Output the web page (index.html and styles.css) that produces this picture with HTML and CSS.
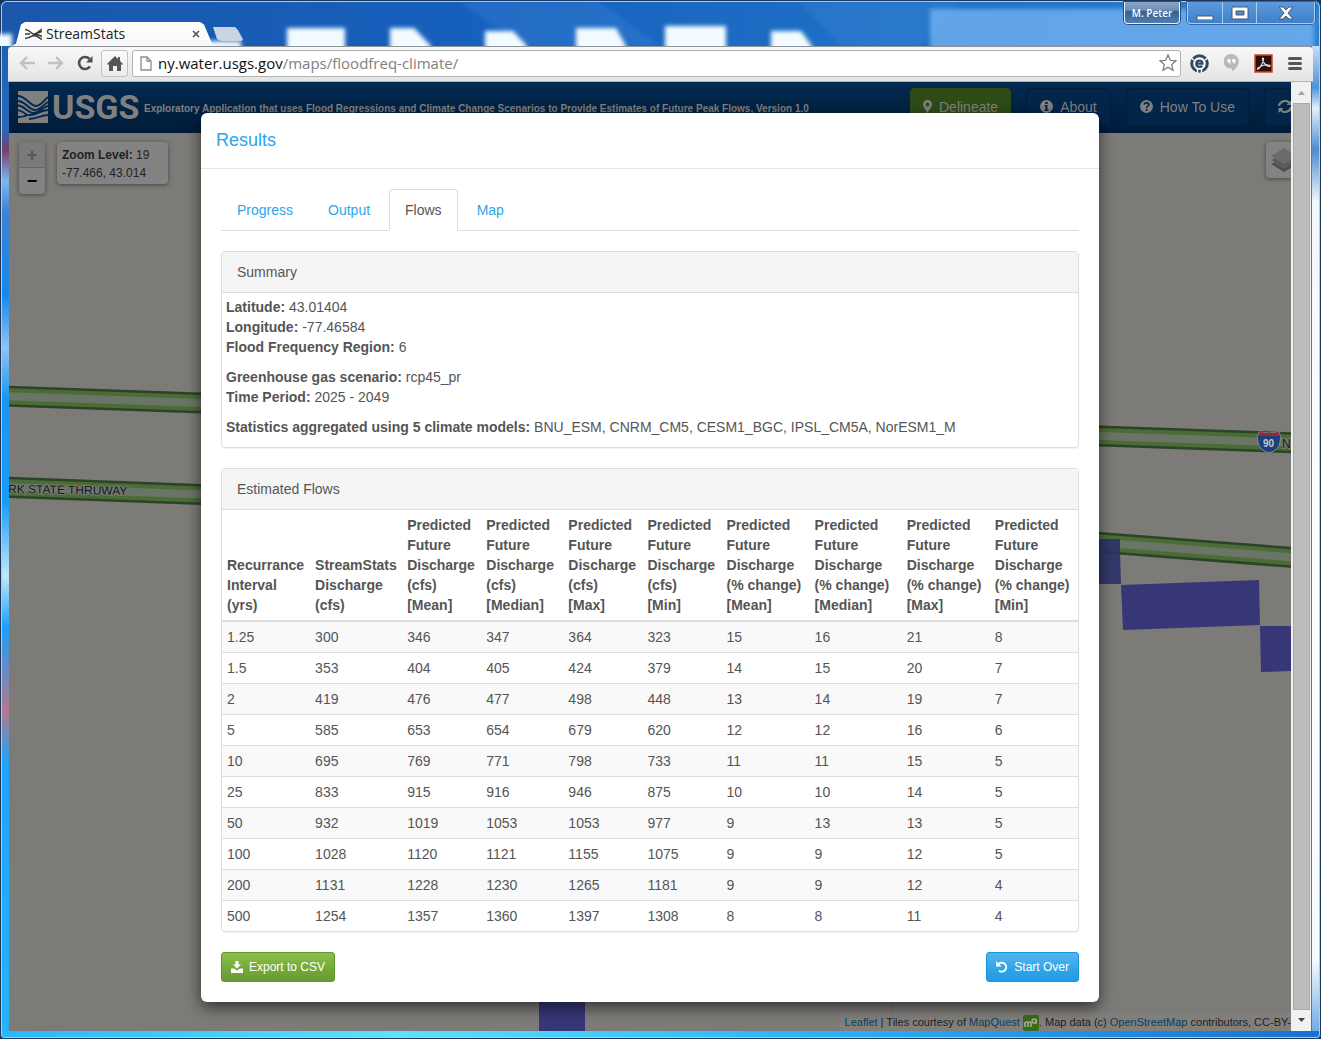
FILE: index.html
```html
<!DOCTYPE html>
<html lang="en">
<head>
<meta charset="utf-8">
<title>StreamStats</title>
<link rel="stylesheet" href="styles.css">
</head>
<body>
<div class="window">
  <header class="titlebar">
    <svg class="glass" aria-hidden="true">
      <defs><filter id="soft" x="-10%" y="-40%" width="120%" height="180%"><feGaussianBlur stdDeviation="2"/></filter></defs>
      <path d="M460 2h140l60 44H520zM800 2h160l-40 44H840z" fill="#4a90dd" opacity=".25" filter="url(#soft)"/>
      <path d="M930 9h384v40H930z" fill="#7db9f5" opacity=".7" filter="url(#soft)"/>
      <g fill="#f2fbff" filter="url(#soft)">
        <path d="M287 28h58v25h-58zM390 28h24l17 18v8h-41zM485 31h28l14 15v8h-42zM576 28h40l10 18v8h-50zM665 26h61v28h-61zM771 31h30l11 15v8h-41zM-10 34h22v16h-22zM205 41h36v8h-36z"/>
      </g>
    </svg>
    <div class="tab">
      <svg class="tab-icon" viewBox="0 0 17 12" aria-hidden="true"><path d="M0 1.500c5 0 6 4.500 9 4.500 3 0 5-3 8-5M0 10.500C6 10.500 8 6 17 3.500M0 6h5M7 8c4-1 5 0 10 3.500M10 6.500c3-.500 4 .500 7 2" fill="none" stroke="#3b3b3b" stroke-width="1.500"/></svg>
      <span class="tab-title">StreamStats</span>
      <button class="tab-close" aria-label="Close tab"><svg viewBox="0 0 8 8"><path d="M1 1l6 6M7 1L1 7" stroke="#555" stroke-width="1.7"/></svg></button>
    </div>
    <button class="new-tab" aria-label="New tab"></button>
    <div class="win-controls">
      <button class="profile">M. Peter</button>
      <div class="win-group">
        <button aria-label="Minimize"><svg width="18" height="14" viewBox="0 0 18 14"><path d="M1 10h16v4H1z" fill="#fff" stroke="#47586e"/></svg></button>
        <button aria-label="Maximize"><svg width="18" height="14" viewBox="0 0 18 14"><path d="M1 1h16v12H1zM5 5v4h8V5z" fill="#fff" stroke="#47586e" fill-rule="evenodd"/></svg></button>
        <button class="wide" aria-label="Close"><svg width="16" height="14" viewBox="0 0 16 14"><path d="M1 1h4l3 3 3-3h4l-5 6 5 6h-4L8 10l-3 3H1l5-6z" fill="#fff" stroke="#47586e"/></svg></button>
      </div>
    </div>
  </header>

  <div class="toolbar">
    <button class="nav-btn" aria-label="Back"><svg width="16" height="14" viewBox="0 0 16 14"><path d="M8 1L2 7l6 6M2 7h14" fill="none" stroke="#c1c1c1" stroke-width="2.4"/></svg></button>
    <button class="nav-btn" aria-label="Forward"><svg width="16" height="14" viewBox="0 0 16 14"><path d="M8 1l6 6-6 6M14 7H0" fill="none" stroke="#c1c1c1" stroke-width="2.4"/></svg></button>
    <button class="nav-btn" aria-label="Reload"><svg width="16" height="16" viewBox="0 0 16 16"><path d="M13 11.5A6 6 0 1 1 12.500 4" fill="none" stroke="#505050" stroke-width="2.6"/><path d="M15.500 1v6.500H9z" fill="#505050"/></svg></button>
    <button class="home-btn" aria-label="Home"><svg width="16" height="15" viewBox="0 0 16 15"><path d="M8 0l3 3V1h2v4l3 3-1 1-1-1v7H10v-5H6v5H2V8L1 9 0 8z" fill="#555"/></svg></button>
    <div class="omnibox">
      <svg width="12" height="15" viewBox="0 0 12 15" aria-hidden="true"><path d="M1 1h6l4 4v9H1zM7 1v4h4" fill="#fff" stroke="#8d8d8d" stroke-width="1.3"/></svg>
      <div class="url" role="textbox" aria-label="Address" contenteditable="true" spellcheck="false">ny.water.usgs.gov<span class="path">/maps/floodfreq-climate/</span></div>
      <button class="star" aria-label="Bookmark"><svg width="18" height="18" viewBox="0 0 18 18"><path d="M9 1l2.300 5.300 5.700.500-4.300 3.800 1.300 5.700L9 13.300 4 16.300l1.300-5.700L1 6.800l5.700-.500z" fill="#fff" stroke="#777" stroke-width="1.200"/></svg></button>
    </div>
    <div class="extensions">
      <button class="nav-btn" aria-label="Extension"><svg width="19" height="19" viewBox="0 0 19 19"><circle cx="9.500" cy="9.500" r="9.300" fill="#34495e"/><circle cx="9.500" cy="9.500" r="6.300" fill="#fff"/><path d="M0 3l4 3M19 3l-4 3M7.500 14v5M11.500 14v5" stroke="#fff" stroke-width="1.400"/><path d="M6.200 9.700h6.300c0-2-1.200-3.100-3-3.100s-3.200 1.300-3.200 3.100 1.300 3.200 3.300 3.200c1.200 0 2-.400 2.700-1" fill="none" stroke="#34495e" stroke-width="2.200"/></svg></button>
      <button class="nav-btn" aria-label="Hangouts"><svg width="15" height="18" viewBox="0 0 15 18"><path d="M7.500 0a7.300 7.300 0 0 1 7.300 7.300c0 4.500-3.300 7.700-6.800 10.200v-3A7.300 7.300 0 1 1 7.500 0z" fill="#b9b9b9"/><path d="M3.500 5h3v3.500L5 10.500V8.300H3.500zM8.300 5h3v3.500l-1.500 2V8.300H8.300z" fill="#fff"/></svg></button>
      <button class="nav-btn" aria-label="Adobe Acrobat"><svg width="19" height="19" viewBox="0 0 19 19"><path d="M1 1h17v17H1z" fill="#1d1214" stroke="#f03a10" stroke-width="1.500"/><path d="M9 4c-1.500 0 0 4 2 6s4 3 5 2-3-1.500-6-.800S4 13.500 3.500 14.800s2 0 3.800-3.500S10.500 4 9 4z" fill="none" stroke="#e8dcdc" stroke-width="1.100"/></svg></button>
      <button class="nav-btn" aria-label="Menu"><svg width="14" height="13" viewBox="0 0 14 13"><path d="M1.500 1.500h11M1.500 6.500h11M1.500 11.500h11" stroke="#555" stroke-width="3" stroke-linecap="round"/></svg></button>
    </div>
  </div>

  <div class="viewport">
    <div class="page">
      <nav class="navbar">
        <svg class="mark" viewBox="0 0 30 32" aria-hidden="true"><path d="M0 0h30v32H0z" fill="#808080"/><path d="M0 5c8 0 12 10 18 10 5 0 8-6 12-9M0 10c7 0 11 9 17 9 5 0 9-6 13-8M0 14.500c6 0 10 7.500 15 7.500 6 0 10-6 15-7M10 24c8 1 12-5 20-5M0 19c4 1 6 2 9 5-3 2-6 2-9 2M11 28c8 0 12-4 19-4" fill="none" stroke="#02274e" stroke-width="1.800"/></svg>
        <span class="wordmark">USGS</span>
        <span class="app-title">Exploratory Application that uses Flood Regressions and Climate Change Scenarios to Provide Estimates of Future Peak Flows, Version 1.0</span>
        <div class="nav-actions">
          <button class="nav-action green"><svg width="9" height="13" viewBox="0 0 9 13"><path d="M4.500 0A4.500 4.500 0 0 1 9 4.500C9 7 6 10 4.500 13 3 10 0 7 0 4.500A4.500 4.500 0 0 1 4.500 0zm0 2.500a2 2 0 1 0 0 4 2 2 0 0 0 0-4z" fill="currentColor"/></svg>Delineate</button>
          <button class="nav-action"><svg width="13" height="13" viewBox="0 0 13 13"><path d="M6.500 0a6.500 6.500 0 1 1 0 13 6.500 6.500 0 0 1 0-13zM5.300 2v2h2.400V2zM4.500 5v1.500h1v3h-1V11h4V9.500h-1V5z" fill="currentColor"/></svg>About</button>
          <button class="nav-action"><svg width="13" height="13" viewBox="0 0 13 13"><circle cx="6.500" cy="6.500" r="6.500" fill="currentColor"/><path d="M4.300 4.700c0-2.600 4.600-2.400 4.600 0 0 1.500-2.300 1.500-2.300 3.300M6.600 9v2" fill="none" stroke="#02254a" stroke-width="1.700"/></svg>How To Use</button>
          <button class="nav-action" aria-label="Refresh"><svg width="14" height="13" viewBox="0 0 14 13"><path d="M1 6a6 5.500 0 0 1 10-3.500M13 7a6 5.500 0 0 1-10 3.500" fill="none" stroke="currentColor" stroke-width="2.200"/><path d="M13.500 0v5H8.500zM.500 13V8h5z" fill="currentColor"/></svg></button>
        </div>
      </nav>

      <main class="map">
        <svg class="tiles" aria-hidden="true">
          <g fill="none">
            <g stroke="#2b4426" stroke-width="21"><path d="M-10 263L192 270 1091 303 1600 321"/><path d="M-10 354L192 361.500 1091 409.500 1600 449"/></g>
            <g stroke="#4b6c37" stroke-width="16"><path d="M-10 263L192 270 1091 303 1600 321"/><path d="M-10 354L192 361.500 1091 409.500 1600 449"/></g>
            <g stroke="#6a7566" stroke-width="8"><path d="M-10 263L192 270 1091 303 1600 321"/><path d="M-10 354L192 361.500 1091 409.500 1600 449"/></g>
          </g>
          <path d="M871 860v50M883 860v50" stroke="#6f6e72"/>
          <path d="M1060 406h51v13l1 32h-52z" fill="#2c3467" opacity=".93"/>
          <path d="M1112 452l138-5 1 45-137 5zM1251 493h60v44l-59 2zM530 860h46v60h-46z" fill="#373777"/>
          <path d="M1250 299q10 2 20 0 3 4 1 10-1 8-11 11-10-3-11-11-2-6 1-10z" fill="#1d4077" stroke="#858a91"/>
          <path d="M1251 299q9 2 18 0l2 4h-22z" fill="#9d2631"/>
          <text x="1254" y="314" class="shield">90</text>
          <text x="1273" y="315" class="road">N</text>
          <text x="-1" y="360" class="road" transform="rotate(1 0 360)">RK STATE THRUWAY</text>
        </svg>
        <div class="zoom">
          <button class="off" aria-label="Zoom in">+</button>
          <button aria-label="Zoom out">−</button>
        </div>
        <div class="coords"><b>Zoom Level:</b> 19<br>-77.466, 43.014</div>
        <button class="layers" aria-label="Layers"><svg width="28" height="26" viewBox="0 0 28 26"><path d="M1 17l13 8 13-8-4-2-9 5-9-5z" fill="#4d4d4d"/><path d="M1 13l13 8 13-8-4-2-9 5-9-5z" fill="#5a5a5a" stroke="#777" stroke-width=".600"/><path d="M14 1L1 9l13 8 13-8z" fill="#6b6b6b"/></svg></button>
        <p class="attribution"><a href="#leaflet">Leaflet</a> | Tiles courtesy of <a href="#mapquest">MapQuest</a> <svg width="16" height="16" viewBox="0 0 16 16" aria-hidden="true"><rect width="16" height="16" rx="2" fill="#3d6a18"/><path d="M2 12V7M2 8q2-2 3 0v4M5 8q2-2 3 0v4" fill="none" stroke="#a4ac9c" stroke-width="1.600"/><circle cx="11" cy="6" r="2" fill="none" stroke="#a4ac9c" stroke-width="1.500"/><path d="M13 4v5" stroke="#a4ac9c" stroke-width="1.500"/></svg>. Map data (c) <a href="#osm">OpenStreetMap</a> contributors, CC-BY-</p>
      </main>

      <section class="modal" role="dialog" aria-labelledby="results">
        <h4 class="modal-title" id="results">Results</h4>
        <div class="modal-body">
          <ul class="tabs">
            <li><a href="#progress">Progress</a></li>
            <li><a href="#output">Output</a></li>
            <li><a class="active" href="#flows">Flows</a></li>
            <li><a href="#map">Map</a></li>
          </ul>

          <section class="panel">
            <h5 class="panel-heading">Summary</h5>
            <div class="summary">
              <p><b>Latitude:</b> 43.01404<br><b>Longitude:</b> -77.46584<br><b>Flood Frequency Region:</b> 6</p>
              <p><b>Greenhouse gas scenario:</b> rcp45_pr<br><b>Time Period:</b> 2025 - 2049</p>
              <p><b>Statistics aggregated using 5 climate models:</b> BNU_ESM, CNRM_CM5, CESM1_BGC, IPSL_CM5A, NorESM1_M</p>
            </div>
          </section>

          <section class="panel">
            <h5 class="panel-heading">Estimated Flows</h5>
            <table class="flows">
              <colgroup><col class="w88"><col class="w92"><col class="w79"><col class="w82"><col class="w79"><col class="w79"><col class="w88"><col class="w92"><col class="w88"><col class="w88"></colgroup>
              <thead><tr>
                <th>Recurrance<br>Interval<br>(yrs)</th><th>StreamStats<br>Discharge<br>(cfs)</th>
                <th>Predicted<br>Future<br>Discharge<br>(cfs)<br>[Mean]</th><th>Predicted<br>Future<br>Discharge<br>(cfs)<br>[Median]</th><th>Predicted<br>Future<br>Discharge<br>(cfs)<br>[Max]</th><th>Predicted<br>Future<br>Discharge<br>(cfs)<br>[Min]</th>
                <th>Predicted<br>Future<br>Discharge<br>(% change)<br>[Mean]</th><th>Predicted<br>Future<br>Discharge<br>(% change)<br>[Median]</th><th>Predicted<br>Future<br>Discharge<br>(% change)<br>[Max]</th><th>Predicted<br>Future<br>Discharge<br>(% change)<br>[Min]</th>
              </tr></thead>
              <tbody>
                <tr><td>1.25</td><td>300</td><td>346</td><td>347</td><td>364</td><td>323</td><td>15</td><td>16</td><td>21</td><td>8</td></tr>
                <tr><td>1.5</td><td>353</td><td>404</td><td>405</td><td>424</td><td>379</td><td>14</td><td>15</td><td>20</td><td>7</td></tr>
                <tr><td>2</td><td>419</td><td>476</td><td>477</td><td>498</td><td>448</td><td>13</td><td>14</td><td>19</td><td>7</td></tr>
                <tr><td>5</td><td>585</td><td>653</td><td>654</td><td>679</td><td>620</td><td>12</td><td>12</td><td>16</td><td>6</td></tr>
                <tr><td>10</td><td>695</td><td>769</td><td>771</td><td>798</td><td>733</td><td>11</td><td>11</td><td>15</td><td>5</td></tr>
                <tr><td>25</td><td>833</td><td>915</td><td>916</td><td>946</td><td>875</td><td>10</td><td>10</td><td>14</td><td>5</td></tr>
                <tr><td>50</td><td>932</td><td>1019</td><td>1053</td><td>1053</td><td>977</td><td>9</td><td>13</td><td>13</td><td>5</td></tr>
                <tr><td>100</td><td>1028</td><td>1120</td><td>1121</td><td>1155</td><td>1075</td><td>9</td><td>9</td><td>12</td><td>5</td></tr>
                <tr><td>200</td><td>1131</td><td>1228</td><td>1230</td><td>1265</td><td>1181</td><td>9</td><td>9</td><td>12</td><td>4</td></tr>
                <tr><td>500</td><td>1254</td><td>1357</td><td>1360</td><td>1397</td><td>1308</td><td>8</td><td>8</td><td>11</td><td>4</td></tr>
              </tbody>
            </table>
          </section>

          <div class="actions">
            <button class="btn export"><svg width="12" height="12" viewBox="0 0 12 12"><path d="M4.500 0h3v3.500H10L6 7.500 2 3.500h2.500zM0 7.500h3l3 2 3-2h3V12H0z" fill="#fff"/></svg>Export to CSV</button>
            <button class="btn restart"><svg width="12" height="12" viewBox="0 0 12 12"><path d="M2 3.500A4.500 4.500 0 1 1 3 9.800" fill="none" stroke="#fff" stroke-width="2"/><path d="M0 0v5.500h5.500z" fill="#fff"/></svg>Start Over</button>
          </div>
        </div>
      </section>
    </div>

    <div class="scrollbar" aria-hidden="true">
      <svg width="7" height="4" viewBox="0 0 7 4"><path d="M0 4h7L3.500 0z" fill="#a0a0a0"/></svg>
      <div class="thumb"></div>
      <svg width="7" height="4" viewBox="0 0 7 4"><path d="M0 0h7L3.500 4z" fill="#444"/></svg>
    </div>
  </div>
</div>
</body>
</html>
```
FILE: styles.css
```css
* { box-sizing: border-box; }

body {
  margin: 0;
  background: #12305f;
  font-family: "Liberation Sans", Arial, sans-serif;
  font-size: 14px;
  line-height: 20px;
  color: #555;
}

button {
  margin: 0;
  padding: 0;
  border: 0;
  background: none;
  font: inherit;
  color: inherit;
  display: flex;
  align-items: center;
  justify-content: center;
}

svg { display: block; flex: none; }
h4, h5, p, ul { margin: 0; padding: 0; font-weight: normal; }
a { color: #2fa4e7; text-decoration: none; }

/* Browser window frame */
.window {
  display: flex;
  flex-direction: column;
  min-height: 100vh;
  padding: 0 9px 8px;
  border-radius: 7px 7px 5px 5px;
  box-shadow: inset 0 0 0 1px #1c3558, inset 0 0 0 2px #9fd0f8;
  background:
    linear-gradient(90deg, #28b8fa, #5fe0fb 30%, #2bb5fa 60%, #1671d2) left bottom / 100% 8px no-repeat,
    linear-gradient(#1d62ba, #2a68b8 8%, #743f67 10%, #7fb5ee 13%, #3a83d4 16%, #1788ea 24%, #8fc4f2 29%, #1a96f4 34%, #1a9cf8 44%, #bfe8fa 51%, #1c9ffa 56%, #b07a90 64%, #1ea4fb 69%, #26b6fb) left 46px / 9px 100% no-repeat,
    linear-gradient(#c5def7, #4d93da 4%, #e4f0fa 6%, #4d8cce 10%, #f2f7fb 15%, #fff 50%, #f4fafd 88%, #6ea9e6 95%, #1a69c8) right 46px / 9px 100% no-repeat,
    linear-gradient(90deg, #1b57ab, #1660bd 35%, #1d6fc6 65%, #2c7fd0);
}

.titlebar {
  position: relative;
  display: flex;
  height: 46px;
  padding: 0 0 0 3px;
}
.glass { position: absolute; top: 0; left: -9px; width: calc(100% + 18px); height: 46px; }

.tab {
  position: relative;
  display: flex;
  align-items: center;
  align-self: flex-end;
  width: 205px;
  height: 24px;
  padding: 0 17px 0 13px;
  gap: 4px;
  background: linear-gradient(#fff, #f7f7f7);
  clip-path: polygon(0 100%, 4px 90%, 9px 10%, 13px 0, 188px 0, 192px 10%, 200px 90%, 100% 100%);
  font-family: "Open Sans", "Noto Sans", sans-serif;
  color: #222;
}
.tab-icon { width: 17px; height: 12px; }
.tab-title { flex: 1; }
.tab-close svg { width: 8px; height: 8px; }
.new-tab {
  position: relative;
  align-self: flex-end;
  width: 30px;
  height: 14px;
  margin: 0 0 5px -4px;
  background: #c9d5e2;
  clip-path: polygon(0 0, 22px 0, 25px 3px, 100% 90%, 28px 100%, 8px 100%, 4px 85%);
}

.win-controls {
  position: relative;
  display: flex;
  gap: 7px;
  margin-left: auto;
  padding-top: 2px;
  margin-right: -3px;
  height: 24px;
}
.profile {
  width: 56px;
  border: 1px solid #e3effb;
  border-top: 0;
  border-radius: 0 0 4px 4px;
  background: linear-gradient(#87a6c8, #6d8db3 40%, #33618f 42%, #4c7fb2);
  box-shadow: 0 0 0 1px #2c4d76;
  font-family: "Open Sans", "Noto Sans", sans-serif;
  font-size: 10px;
  font-weight: 600;
  color: #fff;
}
.win-group {
  display: flex;
  border: 1px solid #a9cdf0;
  border-top: 0;
  border-radius: 0 0 4px 4px;
  box-shadow: 0 0 0 1px #34649a;
  background: linear-gradient(#5c9ade, #3f80c8);
}
.win-group button { width: 34px; }
.win-group button + button { border-left: 1px solid #a9cdf0; }
.win-group .wide { width: 58px; }

/* Toolbar */
.toolbar {
  display: flex;
  align-items: center;
  gap: 3px;
  height: 36px;
  margin: 0 -1px;
  padding: 0 7px 2px 6px;
  border-top: 1px solid #8d9299;
  border-bottom: 1px solid #b4b4b4;
  border-radius: 4px 4px 0 0;
  background: linear-gradient(#f8f8f8, #e4e4e4);
}
.nav-btn { width: 26px; height: 26px; }
.home-btn {
  width: 27px;
  height: 27px;
  border: 1px solid #c2c2c2;
  border-radius: 3px;
  background: linear-gradient(#fafafa, #ececec);
}
.omnibox {
  display: flex;
  align-items: center;
  flex: 1;
  gap: 6px;
  height: 27px;
  margin-left: 1px;
  padding: 0 3px 0 7px;
  border: 1px solid #b3b3b3;
  border-radius: 3px;
  background: #fff;
}
.url {
  flex: 1;
  font-family: "Open Sans", "Noto Sans", sans-serif;
  font-size: 15px;
  color: #111;
  white-space: nowrap;
}
.path { color: #808080; }
.extensions { display: flex; gap: 6px; margin-left: 2px; margin-right: -2px; }

/* Page and scroll bar */
.viewport { display: flex; flex: 1; min-width: 0; }
.page {
  display: grid;
  grid-template: 51px 1fr / 100%;
  flex: 1;
  min-width: 0;
  overflow: hidden;
}
.navbar {
  grid-area: 1 / 1;
  display: flex;
  align-items: center;
  padding: 0 0 2px 9px;
  background: linear-gradient(#02294f, #001c3a);
  color: #808080;
  white-space: nowrap;
}
.mark { width: 30px; height: 32px; }
.wordmark { flex: 0 0 92px; margin-left: 4px; font-family: "Roboto", "Liberation Sans", sans-serif; font-size: 34px; line-height: 40px; font-weight: bold; }
.app-title { flex: 1; min-width: 0; padding-top: 4px; font-size: 10px; font-weight: bold; overflow: hidden; }
.nav-actions { display: flex; flex: 0 0 381px; gap: 15px; overflow: hidden; }
.nav-action {
  flex: none;
  gap: 7px;
  height: 38px;
  padding: 0 13px;
  border: 1px solid #001d3d;
  border-radius: 4px;
  background: #02254a;
}
.nav-action.green { border-color: #2c4a10; background: #2f4b15; padding: 0 12px; }

.map {
  position: relative;
  grid-area: 2 / 1;
  display: flex;
  align-items: flex-start;
  padding: 9px 0 0 10px;
  gap: 12px;
  overflow: hidden;
  background: #7d7b77;
  color: #222;
}
.tiles { position: absolute; left: 0; top: 0; width: 100%; height: 100%; }
.road { font-size: 12px; fill: #151515; stroke: #777b73; stroke-width: 2px; paint-order: stroke; }
.shield { font-size: 10px; font-weight: bold; fill: #c4c8ce; }
.zoom, .coords, .layers {
  position: relative;
  border-radius: 4px;
  background: #838383;
  box-shadow: 0 1px 4px #444;
}
.zoom { width: 26px; }
.zoom button { width: 100%; height: 26px; font: bold 18px/20px "Liberation Sans", sans-serif; color: #000; }
.zoom .off { border-bottom: 1px solid #666; background: #7a7a7a; border-radius: 4px 4px 0 0; color: #555; }
.coords { padding: 4px 5px 2px; width: 111px; font-size: 12px; line-height: 18px; }
.layers { width: 25px; height: 36px; margin-left: auto; padding-left: 4px; border-radius: 4px 0 0 4px; justify-content: flex-start; overflow: hidden; }
.attribution {
  position: absolute;
  right: 0;
  bottom: 0;
  padding-left: 5px;
  background: #807f7c;
  font-size: 11px;
  line-height: 18px;
  white-space: nowrap;
}
.attribution a { color: #0a3f5c; }
.attribution svg { display: inline-block; vertical-align: middle; }

.scrollbar {
  display: flex;
  flex-direction: column;
  align-items: center;
  flex: 0 0 20px;
  gap: 8px;
  margin-right: 1px;
  padding: 9px 0;
  background: #f1f1f1;
}
.thumb { flex: 1; width: 17px; border: 1px solid #a8a8a8; background: #bcbcbc; }

/* Results dialog */
.modal {
  position: relative;
  grid-area: 1 / 1 / 3 / 2;
  justify-self: center;
  align-self: start;
  width: 100%;
  max-width: 898px;
  margin: 31px 0 28px;
  border-radius: 6px;
  background: #fff;
  box-shadow: 0 5px 15px rgba(0, 0, 0, .6);
}
.modal-title { padding: 15px 15px 16px; border-bottom: 1px solid #e5e5e5; font-size: 18px; line-height: 24px; color: #2fa4e7; }
.modal-body { padding: 20px; }

.tabs { display: flex; gap: 3px; border-bottom: 1px solid #ddd; margin-bottom: 20px; list-style: none; }
.tabs li { margin-bottom: -1px; }
.tabs a { display: block; padding: 10px 15px; border: 1px solid transparent; border-radius: 4px 4px 0 0; }
.tabs .active { border-color: #ddd #ddd #fff; background: #fff; color: #555; }

.panel { margin-bottom: 20px; border: 1px solid #ddd; border-radius: 4px; box-shadow: 0 1px 1px rgba(0, 0, 0, .05); overflow: hidden; }
.panel-heading { padding: 10px 15px; border-bottom: 1px solid #ddd; background: #f5f5f5; font-size: 14px; }
.summary { padding: 4px 4px 0; }
.summary p { padding-bottom: 10px; }

.flows { width: 100%; table-layout: fixed; border-spacing: 0; }
.w79 { width: 79px; }
.w82 { width: 82px; }
.w88 { width: 88px; }
.w92 { width: 92px; }
.flows th, .flows td { padding: 5px; text-align: left; white-space: nowrap; }
.flows thead th { border-bottom: 2px solid #ddd; vertical-align: bottom; }
.flows td { border-bottom: 1px solid #ddd; }
.flows tr:last-child td { border-bottom: 0; }
.flows tbody tr:nth-child(odd) { background: #f9f9f9; }

.actions { display: flex; justify-content: space-between; }
.btn { gap: 6px; height: 30px; padding: 0 9px; border: 1px solid; border-radius: 3px; font-size: 12px; color: #fff; }
.export { border-color: #64962f; background: linear-gradient(#88c149, #73a839 60%, #699934); }
.restart { border-color: #1995dc; background: linear-gradient(#54b4eb, #2fa4e7 60%, #1d9ce5); }
```
